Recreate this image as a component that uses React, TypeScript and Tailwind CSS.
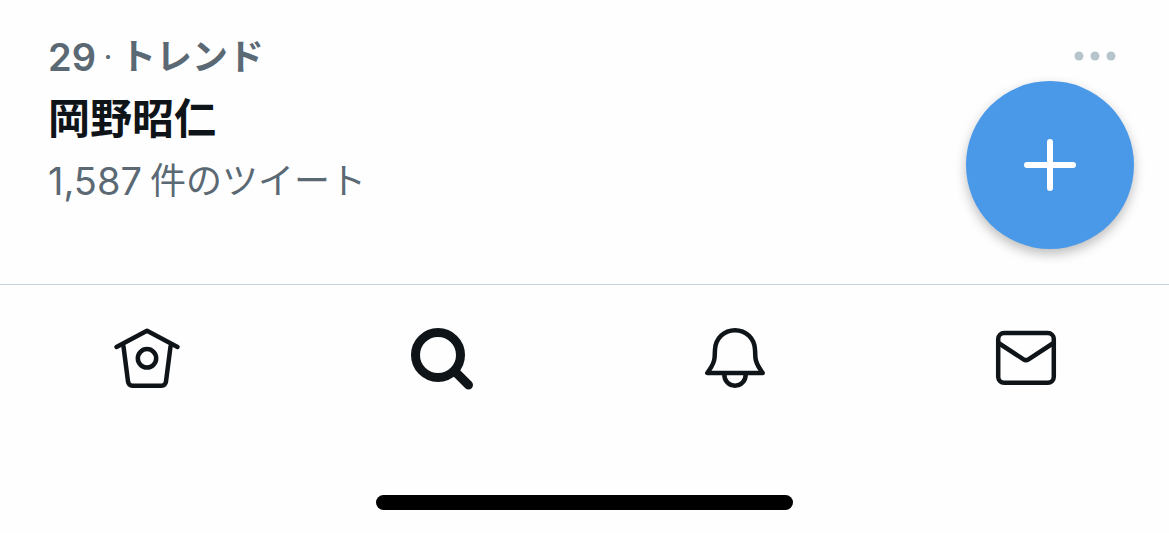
import type { ReactNode } from "react";

function HomeIcon() {
  return (
    <svg viewBox="0 0 72 72" className="size-[72px]" fill="none" stroke="currentColor" strokeWidth="4.5" strokeLinecap="round" strokeLinejoin="round" aria-hidden>
      <path d="M5.5 25 36 8.7 66.5 25" />
      <path d="M12.5 24.5 17 59.5C17.4 62.3 18.8 63.7 21.5 63.7H50.5C53.2 63.7 54.6 62.3 55 59.5L59.5 24.5" />
      <circle cx="36" cy="36.3" r="9.2" />
    </svg>
  );
}

function SearchIcon() {
  return (
    <svg viewBox="0 0 72 72" className="size-[72px]" fill="none" stroke="currentColor" strokeWidth="9" strokeLinecap="round" aria-hidden>
      <circle cx="34" cy="33" r="22.5" />
      <path d="M51 49.5 64.5 63" />
    </svg>
  );
}

function BellIcon() {
  return (
    <svg viewBox="0 0 72 72" className="size-[72px]" fill="none" stroke="currentColor" strokeWidth="4.5" strokeLinecap="round" strokeLinejoin="round" aria-hidden>
      <path d="M38 8.2C27 8.2 18.6 16.5 18 27.5L17.6 35.5C17.2 42 14 45.5 10.3 51H65.7C62 45.5 58.8 42 58.4 35.5L58 27.5C57.4 16.5 49 8.2 38 8.2Z" />
      <path d="M27.3 52.5C27.3 59 32 63.7 38 63.7S48.7 59 48.7 52.5" />
    </svg>
  );
}

function MailIcon() {
  return (
    <svg viewBox="0 0 72 72" className="size-[72px]" fill="none" stroke="currentColor" strokeWidth="4.5" strokeLinejoin="round" aria-hidden>
      <rect x="8.2" y="11" width="55.6" height="49.8" rx="6" />
      <path d="M8.5 21 33.5 37.3Q36 39 38.5 37.3L63.5 21" />
    </svg>
  );
}

const tabs: { label: string; icon: ReactNode }[] = [
  { label: "ホーム", icon: <HomeIcon /> },
  { label: "検索", icon: <SearchIcon /> },
  { label: "通知", icon: <BellIcon /> },
  { label: "メッセージ", icon: <MailIcon /> },
];

export default function App() {
  return (
    <div className="min-h-screen bg-[#fefefe] font-['Inter','Noto_Sans_CJK_JP',sans-serif] text-[#0f1419]">
      <main className="relative pt-[26px] pr-[50px] pb-[72px] pl-12">
        <div className="flex items-center justify-between">
          <p className="flex items-center gap-2 text-[38px] leading-[62px] font-semibold text-[#5a6974]">
            <span>29</span>
            <span className="text-2xl font-bold">·</span>
            <span className="text-[36px] font-bold">トレンド</span>
          </p>
          <button type="button" aria-label="もっと見る" className="text-[#b6c5cc]">
            <svg viewBox="0 0 48 24" className="h-6 w-12" fill="currentColor" aria-hidden>
              <circle cx="8" cy="11" r="4.5" />
              <circle cx="24" cy="11" r="4.5" />
              <circle cx="40" cy="11" r="4.5" />
            </svg>
          </button>
        </div>
        <h2 className="text-[42px] leading-[62px] font-bold">岡野昭仁</h2>
        <p className="flex items-center gap-2 text-[38px] leading-[62px] text-[#5a6974]">
          <span>1,587</span>
          <span className="text-[36px]">件のツイート</span>
        </p>

        <button
          type="button"
          aria-label="ツイートする"
          className="absolute right-[35px] bottom-[35px] flex size-[168px] items-center justify-center rounded-full bg-[#4a99e9] text-white shadow-[0_5px_12px_rgba(0,0,0,0.26)]"
        >
          <svg viewBox="0 0 54 54" className="size-[54px]" stroke="currentColor" strokeWidth="6" strokeLinecap="round" aria-hidden>
            <path d="M27 4v46M4 27h46" />
          </svg>
        </button>
      </main>

      <nav className="flex justify-between border-t border-[#c4d2db] pt-[37px] pr-[107px] pl-[111px]">
        {tabs.map((tab) => (
          <button key={tab.label} type="button" aria-label={tab.label}>
            {tab.icon}
          </button>
        ))}
      </nav>

      <div className="mx-auto mt-[101px] h-[15px] w-[417px] max-w-full rounded-full bg-black" />
    </div>
  );
}
